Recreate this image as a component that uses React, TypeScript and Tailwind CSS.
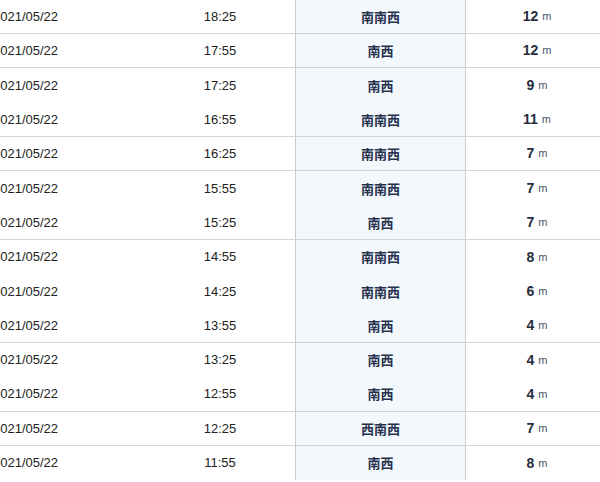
const rows = [
  { time: '18:25', dir: '南南西', val: 12, h: 'h-[34px]', line: true },
  { time: '17:55', dir: '南西', val: 12, h: 'h-[34px]', line: true },
  { time: '17:25', dir: '南西', val: 9, h: 'h-[35px]', line: false },
  { time: '16:55', dir: '南南西', val: 11, h: 'h-[34px]', line: true },
  { time: '16:25', dir: '南南西', val: 7, h: 'h-[34px]', line: true },
  { time: '15:55', dir: '南南西', val: 7, h: 'h-[35px]', line: false },
  { time: '15:25', dir: '南西', val: 7, h: 'h-[34px]', line: true },
  { time: '14:55', dir: '南南西', val: 8, h: 'h-[34px]', line: false },
  { time: '14:25', dir: '南南西', val: 6, h: 'h-[35px]', line: false },
  { time: '13:55', dir: '南西', val: 4, h: 'h-[34px]', line: true },
  { time: '13:25', dir: '南西', val: 4, h: 'h-[34px]', line: false },
  { time: '12:55', dir: '南西', val: 4, h: 'h-[35px]', line: true },
  { time: '12:25', dir: '西南西', val: 7, h: 'h-[34px]', line: true },
  { time: '11:55', dir: '南西', val: 8, h: 'h-[34px]', line: false },
];

export default function App() {
  return (
    <div className="w-[600px] h-[482px] overflow-hidden bg-white font-['Liberation_Sans','Noto_Sans_CJK_SC',sans-serif]">
      {/* the date column starts off-screen, as in the capture */}
      <div className="-ml-[7px] w-[615px]">
        {rows.map((r, i) => (
          <div
            key={i}
            className={`grid grid-cols-[152px_150px_171px_142px] ${r.h} ${
              r.line ? 'border-b border-[#d3d6db]' : ''
            }`}
          >
            <div className="flex items-center text-[13px] text-[#222]">2021/05/22</div>
            <div className="flex items-center justify-center text-[13px] text-[#222]">{r.time}</div>
            <div className="flex items-center justify-center border-l border-r border-[#c9ccd2] bg-[#f3f8fd] text-[13px] font-bold text-[#27324d] font-['Noto_Sans_CJK_SC',sans-serif]">
              {r.dir}
            </div>
            <div className="flex items-center justify-center gap-[4px] text-[#262d3c]">
              <span className="text-[14px] font-bold">{r.val}</span>
              <span className="text-[11px] text-[#4a5468]">m</span>
            </div>
          </div>
        ))}
      </div>
    </div>
  );
}
